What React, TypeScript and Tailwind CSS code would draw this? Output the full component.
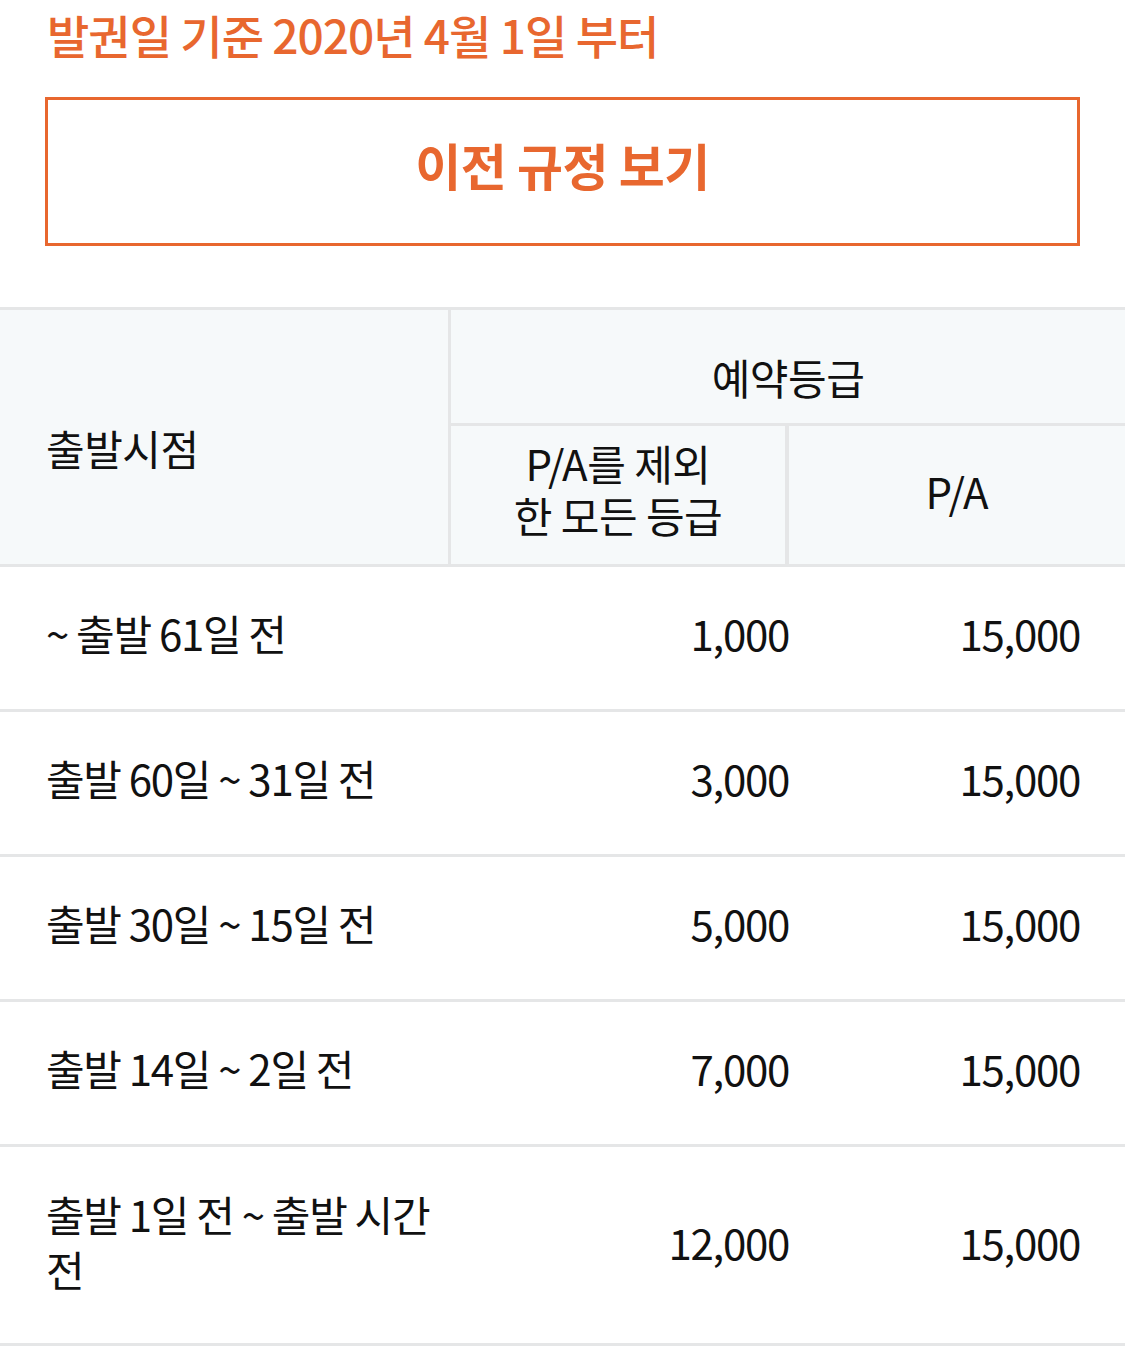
const rows = [
  { label: '~ 출발 61일 전', normal: '1,000', pa: '15,000' },
  { label: '출발 60일 ~ 31일 전', normal: '3,000', pa: '15,000' },
  { label: '출발 30일 ~ 15일 전', normal: '5,000', pa: '15,000' },
  { label: '출발 14일 ~ 2일 전', normal: '7,000', pa: '15,000' },
];

const font = { fontFamily: '"Noto Sans CJK KR", "Noto Sans", sans-serif' };

export default function App() {
  return (
    <div className="w-[1125px] min-h-[1348px] bg-white text-[#111]" style={font}>
      <div className="px-[45px] pt-[4px]">
        <h2 className="text-[46px] leading-[60px] font-medium text-[#e8672f] tracking-[-1px] pl-[2px]">
          발권일 기준 2020년 4월 1일 부터
        </h2>
        <button className="mt-[33px] w-[1035px] h-[149px] border-[3px] border-[#e8672f] flex items-center justify-center pb-[14px] text-[50px] font-bold text-[#e8672f] tracking-[-0.5px]">
          이전 규정 보기
        </button>
      </div>

      <div className="mt-[61px] border-t-[3px] border-[#e5e6e7]">
        {/* header */}
        <div className="flex bg-[#f6f9fa] border-b-[3px] border-[#e5e6e7] h-[257px]">
          <div className="w-[451px] flex items-center pl-[46px] pt-[20px] text-[42px] tracking-[-0.5px] border-r-[3px] border-[#e5e6e7]">
            출발시점
          </div>
          <div className="flex-1 flex flex-col">
            <div className="h-[116px] flex items-center justify-center text-[42px] tracking-[-0.5px] border-b-[3px] border-[#e5e6e7] pt-[20px]">
              예약등급
            </div>
            <div className="flex-1 flex">
              <div className="w-[338px] flex items-center justify-center text-center text-[42px] leading-[52px] tracking-[-0.5px] border-r-[4px] border-[#e5e6e7] pb-[12px]">
                P/A를 제외
                <br />
                한 모든 등급
              </div>
              <div className="flex-1 flex items-center justify-center text-[42px] pb-[10px]">
                P/A
              </div>
            </div>
          </div>
        </div>

        {/* body */}
        {rows.map((r) => (
          <div
            key={r.label}
            className="grid grid-cols-[448px_341px_1fr] items-center h-[145px] border-b-[3px] border-[#e5e6e7] text-[42px] tracking-[-1.3px] pb-[12px]"
          >
            <div className="pl-[46px]">{r.label}</div>
            <div className="text-right">{r.normal}</div>
            <div className="text-right pr-[45px]">{r.pa}</div>
          </div>
        ))}
        <div className="grid grid-cols-[448px_341px_1fr] items-center h-[199px] border-b-[3px] border-[#e5e6e7] text-[42px] tracking-[-1.3px] pb-[8px]">
          <div className="pl-[46px] leading-[55px]">
            출발 1일 전 ~ 출발 시간
            <br />
            전
          </div>
          <div className="text-right">12,000</div>
          <div className="text-right pr-[45px]">15,000</div>
        </div>
      </div>
    </div>
  );
}
